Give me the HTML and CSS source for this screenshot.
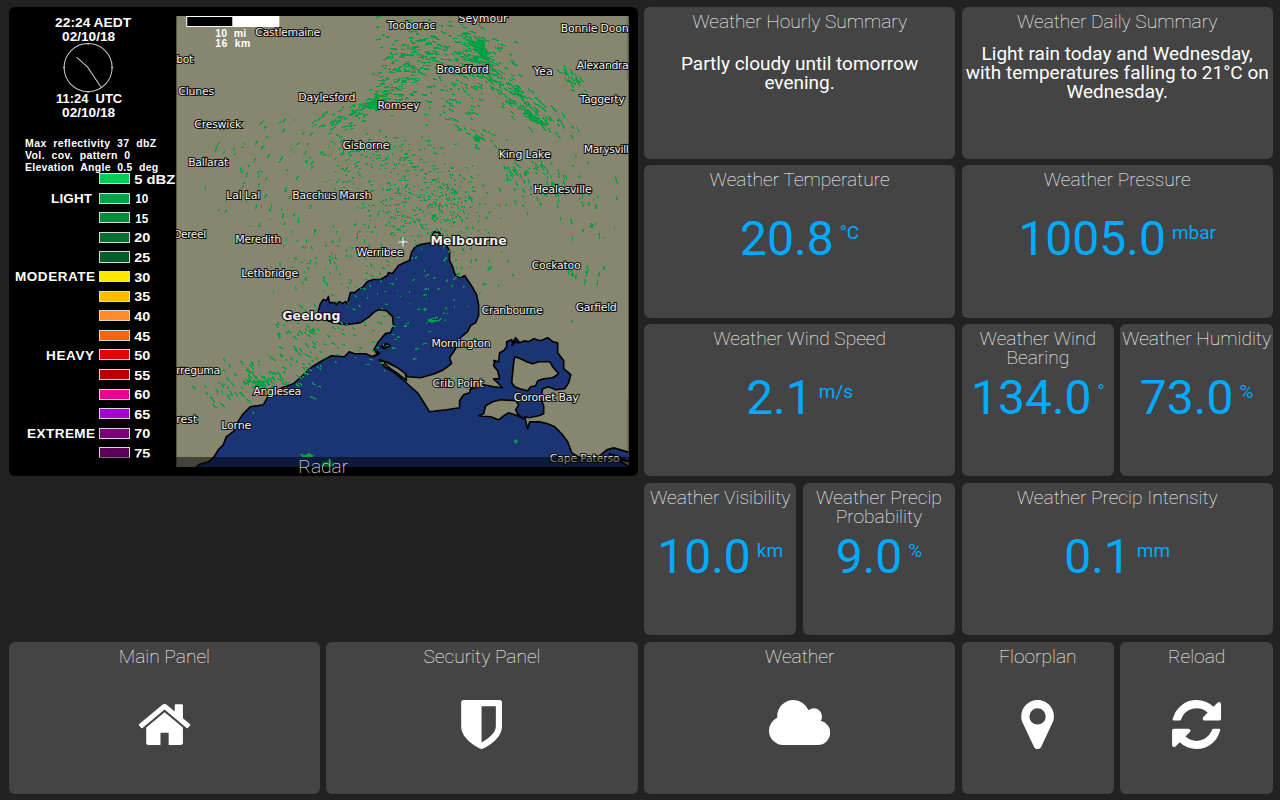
FILE: index.html
```html
<!DOCTYPE html>
<html lang="en">
<head>
<meta charset="utf-8">
<title>Weather</title>
<link rel="stylesheet" href="styles.css">
</head>
<body>
<main class="dashboard">
  <section class="tile radar">
    <svg class="radar-image" viewBox="9 7 628 469" preserveAspectRatio="none">
      <defs><clipPath id="map"><rect x="176" y="16" width="452" height="450"/></clipPath></defs>
      <g class="caption">
        <text x="55" y="27" textLength="76" lengthAdjust="spacingAndGlyphs">22:24 AEDT</text>
        <text x="62" y="40.500" textLength="53" lengthAdjust="spacingAndGlyphs">02/10/18</text>
        <text x="56" y="103" textLength="66" lengthAdjust="spacingAndGlyphs" xml:space="preserve">11:24  UTC</text>
        <text x="62" y="117" textLength="53" lengthAdjust="spacingAndGlyphs">02/10/18</text>
      </g>
      <circle class="clock" cx="88" cy="67.500" r="24"/>
      <path class="clock" d="M76.500 57l11 10 13.500 20M88 43v2M88 91v2M63 67.500h2M111 67.500h2"/>
      <g class="meta">
        <text x="25" y="147" textLength="131" xml:space="preserve">Max  reflectivity  37  dbZ</text>
        <text x="25" y="159" textLength="105" xml:space="preserve">Vol.  cov.  pattern  0</text>
        <text x="25" y="171" textLength="133" xml:space="preserve">Elevation  Angle  0.5  deg</text>
      </g>
      <g class="swatches">
        <rect x="99.500" y="173.500" width="30" height="10" fill="#00cc55"/>
        <rect x="99.500" y="193" width="30" height="10" fill="#00a348"/>
        <rect x="99.500" y="212.500" width="30" height="10" fill="#008a3c"/>
        <rect x="99.500" y="232" width="30" height="10" fill="#007030"/>
        <rect x="99.500" y="251.500" width="30" height="10" fill="#005d28"/>
        <rect x="99.500" y="271" width="30" height="10" fill="#ffe800"/>
        <rect x="99.500" y="290.500" width="30" height="10" fill="#ffbb00"/>
        <rect x="99.500" y="310" width="30" height="10" fill="#ff8c28"/>
        <rect x="99.500" y="329.500" width="30" height="10" fill="#f86400"/>
        <rect x="99.500" y="349" width="30" height="10" fill="#e60000"/>
        <rect x="99.500" y="368.500" width="30" height="10" fill="#b40000"/>
        <rect x="99.500" y="388.500" width="30" height="10" fill="#ee0090"/>
        <rect x="99.500" y="408" width="30" height="10" fill="#a800cc"/>
        <rect x="99.500" y="427.500" width="30" height="10" fill="#780078"/>
        <rect x="99.500" y="447" width="30" height="10" fill="#5c005c"/>
      </g>
      <g class="caption">
        <text x="134" y="183.500" textLength="41" lengthAdjust="spacingAndGlyphs">5 dBZ</text><text x="135" y="203" textLength="13" lengthAdjust="spacingAndGlyphs">10</text>
        <text x="135" y="222.500" textLength="13" lengthAdjust="spacingAndGlyphs">15</text><text x="134" y="242" textLength="16" lengthAdjust="spacingAndGlyphs">20</text>
        <text x="134" y="261.500" textLength="16" lengthAdjust="spacingAndGlyphs">25</text><text x="134" y="281" textLength="16" lengthAdjust="spacingAndGlyphs">30</text>
        <text x="134" y="300.500" textLength="16" lengthAdjust="spacingAndGlyphs">35</text><text x="134" y="320" textLength="16" lengthAdjust="spacingAndGlyphs">40</text>
        <text x="134" y="340" textLength="16" lengthAdjust="spacingAndGlyphs">45</text><text x="134" y="359.500" textLength="16" lengthAdjust="spacingAndGlyphs">50</text>
        <text x="134" y="379" textLength="16" lengthAdjust="spacingAndGlyphs">55</text><text x="134" y="398.500" textLength="16" lengthAdjust="spacingAndGlyphs">60</text>
        <text x="134" y="418" textLength="16" lengthAdjust="spacingAndGlyphs">65</text><text x="134" y="437.500" textLength="16" lengthAdjust="spacingAndGlyphs">70</text>
        <text x="134" y="457" textLength="16" lengthAdjust="spacingAndGlyphs">75</text>
        <text x="51" y="203" textLength="41">LIGHT</text><text x="15" y="280.500" textLength="80">MODERATE</text>
        <text x="46" y="359" textLength="48">HEAVY</text><text x="27" y="437" textLength="68">EXTREME</text>
      </g>
      <g clip-path="url(#map)">
        <rect class="land" x="176" y="16" width="452" height="450"/>
        <path class="edge" d="M627 18v62M627 398v68"/>
        <path class="water" d="M318 310L320 303 323 299 326 300 328 296 329 302 334 302 336 304 339 301 342 303 345 301 347 303 350 292 354 292 358 289 362 287 367 281 373 279 380 279 387 275 388 272 392 273 398 265 404 262 409 260 411 252 415 246 420 244 425 243 434 242 445 244 449 250 449 260 452 266 454 273 458 277 461 277 464 275 468 281 472 287 476 294 478 304 478 315 475 322 470 325 467 331 460 337 455 348 449 357 451 363 443 369 434 373 420 377 407 376 400 371 394 365 388 362 379 359 384 366 391 370 400 377 409 385 417 392 424 403 429 411 437 410 446 409 459 407 459 400 463 394 469 392 470 388 475 387 483 384 493 386 502 387 497 382 493 378 499 378 497 370 493 365 494 360 498 361 499 352 503 350 506 346 506 341 511 339 512 342 515 337 519 342 524 340 528 341 533 338 540 340 547 337 552 341 557 342 557 352 563 360 563 368 570 374 568 382 564 388 555 389 548 386 542 388 540 398 543 405 543 413 538 415 528 417 524 416 527 428 529 421 539 421 547 423 554 426 561 433 567 441 571 452 580 457 590 460 600 454 606 449 613 447 623 450 630 452 630 468 195 467 200 463 208 461 213 457 218 449 223 444 226 436 234 430 237 422 242 414 250 406 263 404 268 395 279 388 293 383 301 376 307 370 312 366 320 361 331 355 344 356 349 351 354 353 365 353 372 356 379 352 373 350 378 341 385 333 390 332 393 325 392 316 386 310 378 309 373 312 369 316 360 322 346 324 333 322 322 318 317 316Z"/>
        <path class="isle" d="M511 382L513 362 514 356 520 358 526 361 532 363 538 361 549 361 552 366 558 373 552 377 543 378 537 380 535 385 530 386 527 390 519 388 514 386Z"/>
        <path class="isle" d="M478 415L483 413 485 405 492 401 500 399 515 400 518 404 515 409 517 413 523 418 517 415 508 412 503 415 498 419 490 416Z"/>
        <path class="isle" d="M379 359L389 363 397 367 405 373 406 380 396 372 390 368Z"/>
        <path class="blot" d="M381 346l5-3 3 2-5 3zM374 350l4 3-5 3M493 379l4-1M493 359l2 3M511 345l3-4 4 1M431 235l2-3 4-1 3 3M608 453l9 2 7 5 4 1M595 461l6-5 7-1"/>
        <path class="isle" d="M617 457l5 5 9 5v-6l-7-1z"/>
        <g id="echoes"></g>
        <rect x="186" y="16" width="93" height="11" fill="#fff"/><rect x="187" y="17" width="45" height="9"/>
        <g class="scale"><text x="215" y="37" textLength="31" xml:space="preserve">10  mi</text><text x="215" y="47" textLength="35" xml:space="preserve">16  km</text></g>
        <path class="cross" d="M398 241.500h9M402.500 237v9"/>
        <g class="places">
          <text x="255" y="36" textLength="65">Castlemaine</text><text x="387" y="29" textLength="48">Tooborac</text>
          <text x="458" y="22" textLength="49">Seymour</text><text x="560" y="32" textLength="68">Bonnie Doon</text>
          <text x="176" y="63" textLength="17">bot</text><text x="178" y="95" textLength="36">Clunes</text>
          <text x="298" y="101" textLength="57">Daylesford</text><text x="377" y="109" textLength="42">Romsey</text>
          <text x="436" y="73" textLength="52">Broadford</text><text x="533" y="75" textLength="19">Yea</text>
          <text x="576" y="69" textLength="52">Alexandra</text><text x="579" y="103" textLength="45">Taggerty</text>
          <text x="194" y="128" textLength="47">Creswick</text><text x="188" y="166" textLength="40">Ballarat</text>
          <text x="342" y="149" textLength="47">Gisborne</text><text x="583" y="153" textLength="45">Marysvill</text>
          <text x="498" y="158" textLength="52">King Lake</text><text x="533" y="193" textLength="58">Healesville</text>
          <text x="226" y="199" textLength="34">Lal Lal</text><text x="292" y="199" textLength="79">Bacchus Marsh</text>
          <text x="173" y="238" textLength="33">Dereel</text><text x="235" y="243" textLength="46">Meredith</text>
          <text x="356" y="256" textLength="47">Werribee</text><text x="241" y="276" textLength="57">Lethbridge</text>
          <text x="531" y="268" textLength="49">Cockatoo</text><text x="575" y="310" textLength="41">Garfield</text>
          <text x="481" y="313" textLength="61">Cranbourne</text><text x="431" y="346" textLength="59">Mornington</text>
          <text x="432" y="386" textLength="51">Crib Point</text><text x="513" y="400" textLength="65">Coronet Bay</text>
          <text x="176" y="373" textLength="44">rreguma</text><text x="253" y="394" textLength="48">Anglesea</text>
          <text x="176" y="422" textLength="21">rest</text><text x="221" y="428" textLength="30">Lorne</text>
          <text x="549" y="461" textLength="70">Cape Paterso</text>
        </g>
        <g class="cities"><text x="430" y="245" textLength="76">Melbourne</text><text x="282" y="319" textLength="58">Geelong</text></g>
      </g>
    </svg>
    <div class="radar-label">Radar</div>
  </section>

  <section class="tile wide"><h2 class="title">Weather Hourly Summary</h2><p class="summary">Partly cloudy until tomorrow evening.</p></section>
  <section class="tile wide"><h2 class="title">Weather Daily Summary</h2><p class="summary">Light rain today and Wednesday, with temperatures falling to 21°C on Wednesday.</p></section>
  <section class="tile wide"><h2 class="title">Weather Temperature</h2><div class="value">20.8<span class="unit">°C</span></div></section>
  <section class="tile wide"><h2 class="title">Weather Pressure</h2><div class="value">1005.0<span class="unit">mbar</span></div></section>
  <section class="tile wide"><h2 class="title">Weather Wind Speed</h2><div class="value">2.1<span class="unit">m/s</span></div></section>
  <section class="tile"><h2 class="title">Weather Wind Bearing</h2><div class="value">134.0<span class="unit">°</span></div></section>
  <section class="tile"><h2 class="title">Weather Humidity</h2><div class="value">73.0<span class="unit">%</span></div></section>
  <section class="tile after-gap"><h2 class="title">Weather Visibility</h2><div class="value">10.0<span class="unit">km</span></div></section>
  <section class="tile"><h2 class="title">Weather Precip Probability</h2><div class="value">9.0<span class="unit">%</span></div></section>
  <section class="tile wide"><h2 class="title">Weather Precip Intensity</h2><div class="value">0.1<span class="unit">mm</span></div></section>

  <section class="tile wide"><h2 class="title">Main Panel</h2>
    <svg class="icon" viewBox="0 0 1792 1792"><path d="M1472 992v480q0 26-19 45t-45 19h-384v-384h-256v384h-384q-26 0-45-19t-19-45v-480q0-1 .5-3t.5-3l575-474 575 474q1 2 1 6zm223-69l-62 74q-8 9-21 11h-3q-13 0-21-7l-692-577-692 577q-12 8-24 7-13-2-21-11l-62-74q-8-10-7-23.500t11-21.500l719-599q32-26 76-26t76 26l244 204v-195q0-14 9-23t23-9h192q14 0 23 9t9 23v408l219 182q10 8 11 21.500t-7 23.500z"/></svg></section>
  <section class="tile wide"><h2 class="title">Security Panel</h2>
    <svg class="icon" viewBox="0 0 1792 1792"><path d="M1344 960v-640h-448v1137q119-63 213-137 235-184 235-360zm192-768v768q0 86-33.500 170.500t-83 150-118 127.500-126.500 103-121 77.500-89.500 49.500-42.500 20q-12 6-26 6t-26-6q-16-7-42.500-20t-89.500-49.500-121-77.500-126.500-103-118-127.500-83-150-33.500-170.500v-768q0-26 19-45t45-19h1152q26 0 45 19t19 45z"/></svg></section>
  <section class="tile wide"><h2 class="title">Weather</h2>
    <svg class="icon cloud" viewBox="0 0 1920 1792"><path d="M1920 1152q0 159-112.500 271.500t-271.500 112.500h-1088q-185 0-316.500-131.500t-131.500-316.500q0-132 71-241.500t187-163.500q-2-28-2-43 0-212 150-362t362-150q158 0 286.500 88t187.500 230q70-62 166-62 106 0 181 75t75 181q0 75-41 138 129 30 213 134.500t84 239.500z"/></svg></section>
  <section class="tile"><h2 class="title">Floorplan</h2>
    <svg class="icon" viewBox="0 0 1792 1792"><path d="M1152 640q0-106-75-181t-181-75-181 75-75 181 75 181 181 75 181-75 75-181zm256 0q0 109-33 179l-364 774q-16 33-47.500 52t-67.500 19-67.500-19-46.500-52l-365-774q-33-70-33-179 0-212 150-362t362-150 362 150 150 362z"/></svg></section>
  <section class="tile"><h2 class="title">Reload</h2>
    <svg class="icon" viewBox="0 0 1792 1792"><path d="M1639 1056q0 5-1 7-64 268-268 434.500t-478 166.500q-146 0-282.500-55t-243.500-157l-129 129q-19 19-45 19t-45-19-19-45v-448q0-26 19-45t45-19h448q26 0 45 19t19 45-19 45l-137 137q71 66 161 102t187 36q134 0 250-65t186-179q11-17 53-117 8-23 30-23h192q13 0 22.500 9.500t9.500 22.500zm25-800v448q0 26-19 45t-45 19h-448q-26 0-45-19t-19-45 19-45l138-138q-148-137-349-137-134 0-250 65t-186 179q-11 17-53 117-8 23-30 23h-199q-13 0-22.500-9.500t-9.500-22.500v-7q65-268 270-434.500t480-166.500q146 0 284 55.500t245 156.500l130-129q19-19 45-19t45 19 19 45z"/></svg></section>
</main>
<script src="echoes.js"></script>
</body>
</html>
```
FILE: styles.css
```css
* { box-sizing: border-box; }
body {
  margin: 0;
  background: #222;
  color: #fff;
  font-family: Roboto, sans-serif;
  font-size: 19px;
  line-height: 19px;
}
.dashboard {
  display: grid;
  width: 1280px;
  height: 800px;
  padding: 6.500px 7.200px 6px 8.800px;
  grid-template-columns: repeat(8, minmax(0, 1fr));
  grid-template-rows: repeat(5, minmax(0, 1fr));
  gap: 6.400px;
}
.tile {
  display: flex;
  flex-direction: column;
  align-items: center;
  border-radius: 6px;
  background: #444;
  text-align: center;
}
.wide { grid-column: span 2; }
.after-gap { grid-column: 5; }
.title {
  flex: none;
  height: 38px;
  margin: 5px 0 0;
  font-size: 19.200px;
  font-weight: 100;
  line-height: 19px;
  color: #fff;
}
.summary {
  display: flex;
  align-items: center;
  height: 48px;
  margin: -1px 0 0;
  font-size: 19px;
}
.value {
  display: flex;
  align-items: flex-start;
  height: 60px;
  margin-top: 3px;
  gap: 6px;
  font-size: 48px;
  line-height: 56px;
  color: #0af;
}
.unit { margin-top: 12px; font-size: 19px; line-height: 19px; }
.icon { flex: none; width: 57.140px; height: 57.140px; margin-top: 11px; fill: #fff; }
.cloud { width: 61.220px; }

.radar { position: relative; grid-column: 1 / span 4; grid-row: 1 / span 3; background: #000; }
.radar-image { display: block; width: 100%; height: 100%; }
.radar-label {
  position: absolute;
  left: 0;
  right: 0;
  bottom: 0;
  height: 19px;
  border-radius: 0 0 6px 6px;
  background: rgba(0, 0, 0, .5);
  font-weight: 100;
  font-size: 19.200px;
}
.caption, .meta, .scale { fill: #fff; font-family: "Liberation Sans", Arial, sans-serif; font-weight: 700; font-size: 13.500px; }
.meta, .scale { font-size: 10.500px; white-space: pre; }
.clock { fill: none; stroke: #ccc; }
.swatches { stroke: #d8d8d8; shape-rendering: crispEdges; }
.land, .isle { fill: #87876f; }
.edge { stroke: #6c6e58; stroke-width: 2; }
.water { fill: #1b3473; }
.water, .isle { stroke: #000; stroke-width: 1.600; stroke-linejoin: round; }
.blot { fill: none; stroke: #000; stroke-width: 2; }
.echo { stroke: #00a044; stroke-width: 1.300; fill: none; shape-rendering: crispEdges; }
.blob { fill: #00a044; shape-rendering: crispEdges; }
.cross { stroke: #fff; }
.places, .cities { fill: #f0f0f0; stroke: #111; stroke-width: 2.200px; paint-order: stroke; font-family: "DejaVu Sans", sans-serif; font-size: 11px; }
.cities { font-size: 12.500px; font-weight: 700; }
```
FILE: echoes.js
```js
// Rain echoes: short streaks scattered in bands, running along arcs round the radar site.
(function () {
  var seed = 7;
  function rnd() { seed = (seed * 1103515245 + 12345) % 2147483648; return seed / 2147483648; }
  function gauss() { return rnd() + rnd() + rnd() - 1.5; }
  // centre x, centre y, spread x, spread y, tilt in degrees, count, streak length
  var bands = [
    [470, 50, 42, 24, 30, 100, 7], [425, 55, 42, 24, 0, 80, 7], [400, 38, 26, 18, 0, 28, 5],
    [520, 100, 55, 16, 35, 110, 7], [488, 72, 30, 10, 35, 45, 7], [570, 76, 16, 7, 45, 26, 7],
    [450, 88, 60, 30, 0, 95, 5], [355, 112, 55, 12, -25, 80, 6], [380, 98, 28, 10, -30, 45, 6],
    [392, 75, 22, 22, 0, 40, 5], [345, 145, 90, 28, 0, 75, 5], [470, 128, 34, 16, 35, 28, 6],
    [420, 195, 75, 50, 0, 240, 2.5], [425, 220, 65, 25, 0, 130, 2.5], [450, 190, 24, 26, 0, 70, 3],
    [370, 175, 60, 35, 0, 70, 3], [250, 170, 55, 40, 0, 34, 6], [275, 210, 36, 26, 0, 22, 5],
    [540, 180, 34, 28, 0, 75, 5], [512, 170, 10, 10, 0, 18, 5], [600, 205, 26, 35, 0, 18, 5],
    [330, 265, 60, 35, 0, 75, 3.5], [400, 290, 75, 60, 0, 85, 3], [310, 340, 34, 36, 0, 70, 5],
    [270, 378, 48, 24, 0, 64, 6], [268, 386, 20, 10, 20, 30, 6], [228, 395, 40, 26, 0, 26, 6],
    [480, 265, 50, 26, 0, 28, 4], [585, 275, 18, 16, 0, 14, 5], [380, 345, 50, 26, 0, 28, 4],
    [435, 318, 12, 3, -25, 8, 6]
  ];
  var d = "";
  bands.forEach(function (b) {
    var t = b[4] * Math.PI / 180;
    for (var i = 0; i < b[5]; i++) {
      var u = gauss() * b[2], v = gauss() * b[3];
      var x = b[0] + u * Math.cos(t) - v * Math.sin(t);
      var y = b[1] + u * Math.sin(t) + v * Math.cos(t);
      var a = Math.atan2(y - 242, x - 402) + Math.PI / 2 + (rnd() - .5) * .3;
      var n = b[6] * (.35 + rnd() * .75);
      d += "M" + x.toFixed(1) + " " + y.toFixed(1) + "l" + (Math.cos(a) * n).toFixed(1) + " " + (Math.sin(a) * n).toFixed(1);
    }
  });
  var blobs =
    "M466 43l5-3 4 1 4-2 6 2-1 5 3 5-1 4 5 4-6 1-4-1-3-6-5-2 1-4-5-1z" +
    "M524 108l5 2 3 4 6 4 4 3 5 4-4 1-7-3-7-3-1-4-5-4z" +
    "M364 107l6-4 3-3 3-9 3 4 0 5 5-2 3 3-5 4-5 4-8 0z" +
    "M472 137l4-3 4 4-1 4-5-1zM309 329l4-2 2 3-2 4-4-2z" +
    "M254 382l5-3 5 2 0 4-6 2-3 0zM299 453l6 1 4-2 3 2 3 1-4 1-9 0z" +
    "M322 461l6-2 5 2 1 4-9 2-4-2zM513 440l3-2 1 3-2 2zM570 318l2 3-2 3zM590 222l3 3-1 3-3-2z";
  document.getElementById("echoes").innerHTML =
    '<path class="echo" d="' + d + '"/><path class="blob" d="' + blobs + '"/>';
})();
```
